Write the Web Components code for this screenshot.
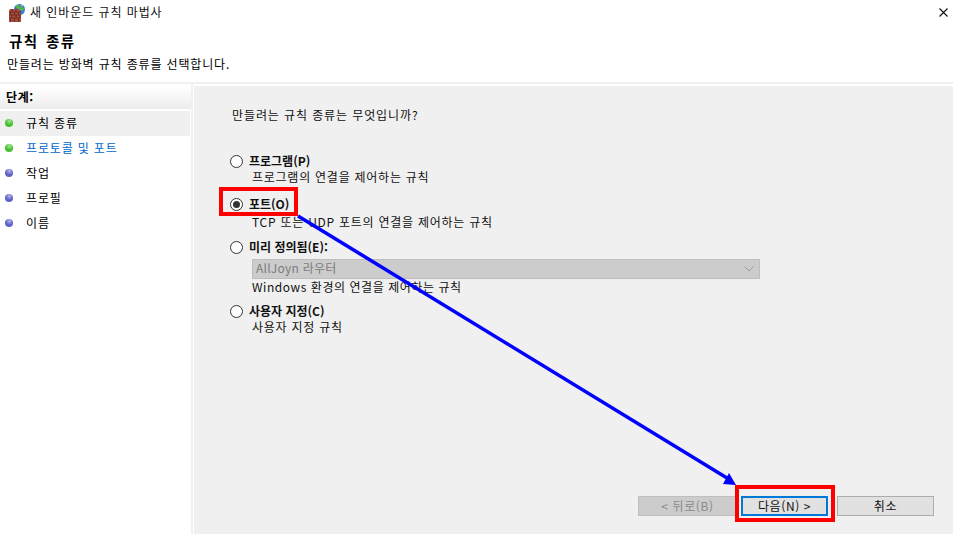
<!DOCTYPE html>
<html lang="ko">
<head>
<meta charset="utf-8">
<title>새 인바운드 규칙 마법사</title>
<style>
  html, body { margin: 0; height: 100%; background: #fff; overflow: hidden; }
  body { font: 12px "Noto Sans CJK KR", "Liberation Sans", sans-serif; color: #000; }
</style>
</head>
<body>
<rule-wizard></rule-wizard>

<script>
const KR = `"Noto Sans CJK KR", "Liberation Sans", sans-serif`;

class TitleBar extends HTMLElement {
  constructor() {
    super();
    const shadow = this.attachShadow({ mode: "open" });
    shadow.innerHTML = `
    <style>
      :host { display: flex; align-items: center; height: 26px; padding-left: 8px; box-sizing: border-box; }
      svg { display: block; flex: none; }
      span { margin-left: 5px; font-size: 12px; line-height: 16px; letter-spacing: .93px; color: #111; position: relative; top: -1px; }
      .close { margin-left: auto; margin-right: 5px; margin-bottom: 1px; }
    </style>
    <svg width="17" height="18" viewBox="0 0 17 18">
      <circle cx="11.500" cy="5.500" r="5.500" fill="#2b7fd6"/>
      <path d="M8 1.500c2-1 3.500 0 4.500 1s2.500.5 3.500 2-1.500 2-3 2-2-1.500-3.500-2S7.500 2.500 8 1.500z" fill="#58b548"/>
      <path d="M12.500.5l2.500 1.200-1 1.300z" fill="#e4d56c"/>
      <path d="M2 5h9l2 3v10H1V7z" fill="#a84a3c"/>
      <path d="M1 8h12M1 11h12M1 14h12M4 5v3M8 5v3M2.500 8v3M6.500 8v3M10.500 8v3M4 11v3M8 11v3M12 11v3M2.500 14v4M6.500 14v4M10.500 14v4" stroke="#732e24" stroke-width="1" fill="none"/>
    </svg>
    <span><slot></slot></span>
    <svg class="close" width="9" height="9" viewBox="0 0 9 9"><path d="M.5.5l8 8M8.500.5l-8 8" stroke="#111" stroke-width="1.100" fill="none"/></svg>
    `;
  }
}

class StepItem extends HTMLElement {
  constructor() {
    super();
    const shadow = this.attachShadow({ mode: "open" });
    const green = this.hasAttribute("done");
    const base = green ? "#45bf2e" : "#5e62c4";
    const light = green ? "#a9e69a" : "#b4b6ec";
    const id = "g" + Math.random().toString(36).slice(2);
    shadow.innerHTML = `
    <style>
      :host { display: flex; align-items: center; height: 25px; padding-left: 5px; box-sizing: border-box; }
      :host([current]) { background: #f0f0f0; margin-right: 1px; }
      :host([link]) { color: #0066cc; }
      svg { flex: none; display: block; position: relative; top: -1px; }
      span { margin-left: 13px; font-size: 12px; line-height: 16px; letter-spacing: .85px; position: relative; top: -1px; }
    </style>
    <svg width="8" height="8" viewBox="0 0 8 8">
      <defs><radialGradient id="${id}" cx=".55" cy=".25" r=".8"><stop offset="0" stop-color="${light}"/><stop offset=".6" stop-color="${base}"/><stop offset="1" stop-color="${base}"/></radialGradient></defs>
      <circle cx="4" cy="4" r="4" fill="url(#${id})"/>
    </svg>
    <span><slot></slot></span>
    `;
  }
}

class StepList extends HTMLElement {
  constructor() {
    super();
    const shadow = this.attachShadow({ mode: "open" });
    shadow.innerHTML = `
    <style>
      :host { display: block; width: 191px; flex: none; border-right: 2px solid #f0f0f0; box-sizing: content-box; }
      .head { height: 22px; margin-top: 3px; padding-left: 6px; font-size: 12px; font-weight: 700; line-height: 19px; letter-spacing: .6px;
              background: linear-gradient(#ffffff, #ececec); margin-bottom: 2px; }
    </style>
    <div class="head">단계:</div>
    <slot></slot>
    `;
  }
}

class RuleOption extends HTMLElement {
  constructor() {
    super();
    const shadow = this.attachShadow({ mode: "open" });
    shadow.innerHTML = `
    <style>
      :host { display: grid; grid-template-columns: 13px 1fr; column-gap: 6px; align-items: start; }
      .radio { width: 13px; height: 13px; box-sizing: border-box; border: 1px solid #333; border-radius: 50%; background: #fff;
               display: flex; align-items: center; justify-content: center; margin-top: 2px; }
      .dot { width: 7px; height: 7px; border-radius: 50%; background: #333; display: none; }
      :host([checked]) .dot { display: block; }
      .label { font-size: 12px; font-weight: 700; line-height: 16px; color: #111; }
      .body { grid-column: 2; margin-left: 3px; margin-top: var(--body-gap, 0); font-size: 12px; line-height: 16px;
              letter-spacing: var(--body-spacing, .75px); color: #111; }
    </style>
    <div class="radio"><div class="dot"></div></div>
    <div class="label"><slot name="label"></slot></div>
    <div class="body"><slot></slot></div>
    `;
  }
}

class RuleSelect extends HTMLElement {
  constructor() {
    super();
    const shadow = this.attachShadow({ mode: "open" });
    shadow.innerHTML = `
    <style>
      :host { display: flex; align-items: center; width: 508px; height: 20px; box-sizing: border-box;
              background: #cccccc; border: 1px solid #bdbdbd; padding: 0 5px 0 3px; color: #7b7b7b;
              font-size: 12px; letter-spacing: .25px; }
      span { position: relative; top: -1px; }
      svg { margin-left: auto; display: block; }
    </style>
    <span><slot></slot></span>
    <svg width="10" height="6" viewBox="0 0 10 6"><path d="M.5.5L5 4.800 9.500.5" stroke="#9a9a9a" fill="none"/></svg>
    `;
  }
}

class WizButton extends HTMLElement {
  constructor() {
    super();
    const shadow = this.attachShadow({ mode: "open" });
    shadow.innerHTML = `
    <style>
      :host { display: flex; align-items: center; justify-content: center; height: 20px; box-sizing: border-box;
              background: #e1e1e1; border: 1px solid #adadad; font-size: 12px; letter-spacing: .6px; color: #111; }
      :host([disabled]) { background: #cccccc; border-color: #bfbfbf; color: #8a8a8a; }
      :host([primary]) { border: 2px solid #0078d7; }
      span { position: relative; top: -1px; }
    </style>
    <span><slot></slot></span>
    `;
  }
}

class RuleWizard extends HTMLElement {
  constructor() {
    super();
    const shadow = this.attachShadow({ mode: "open" });
    shadow.innerHTML = `
    <style>
      :host { display: flex; flex-direction: column; position: relative; width: 953px; height: 534px; overflow: hidden;
              font-family: ${KR}; background: #fff; }
      header { height: 58px; padding: 5px 0 0 9px; box-sizing: border-box; border-bottom: 2px solid #f0f0f0; flex: none; }
      h1 { margin: 0; font-size: 14.500px; line-height: 19px; font-weight: 700; letter-spacing: 1.400px; word-spacing: 2px; }
      header p { margin: 6px 0 0 -2px; font-size: 12px; line-height: 16px; letter-spacing: .85px; }
      .main { flex: 1; display: flex; min-height: 0; }
      .pane { flex: 1; margin: 2px 0 0 1px; background: #f0f0f0; padding: 21px 20px 18px 38px; display: flex; flex-direction: column; }
      .question { font-size: 12px; line-height: 16px; letter-spacing: .9px; color: #111; }
      .options { display: flex; flex-direction: column; margin: 30px 0 0 -2px; }
      .port { margin-top: 11px; --body-gap: 2px; }
      .predefined { margin-top: 9px; --body-spacing: .55px; }
      .custom { margin-top: 8px; }
      rule-select { margin-top: 4px; }
      .buttons { margin-top: auto; display: flex; }
      .buttons > :nth-child(1) { width: 99px; margin-left: 406px; }
      .buttons > :nth-child(2) { width: 87px; margin-left: 4px; }
      .buttons > :nth-child(3) { width: 97px; margin-left: 9px; }
      .mark { position: absolute; border: 4px solid #ff0000; box-sizing: border-box; }
      .arrow { position: absolute; left: 0; top: 0; pointer-events: none; }
    </style>
    <title-bar>새 인바운드 규칙 마법사</title-bar>
    <header>
      <h1>규칙 종류</h1>
      <p>만들려는 방화벽 규칙 종류를 선택합니다.</p>
    </header>
    <div class="main">
      <step-list>
        <step-item done current>규칙 종류</step-item>
        <step-item done link>프로토콜 및 포트</step-item>
        <step-item>작업</step-item>
        <step-item>프로필</step-item>
        <step-item>이름</step-item>
      </step-list>
      <section class="pane">
        <div class="question">만들려는 규칙 종류는 무엇입니까?</div>
        <div class="options">
          <rule-option><span slot="label">프로그램(P)</span>프로그램의 연결을 제어하는 규칙</rule-option>
          <rule-option class="port" checked><span slot="label">포트(O)</span>TCP 또는 UDP 포트의 연결을 제어하는 규칙</rule-option>
          <rule-option class="predefined"><span slot="label">미리 정의됨(E):</span><rule-select>AllJoyn 라우터</rule-select>Windows 환경의 연결을 제어하는 규칙</rule-option>
          <rule-option class="custom"><span slot="label">사용자 지정(C)</span>사용자 지정 규칙</rule-option>
        </div>
        <div class="buttons">
          <wiz-button disabled>&lt; 뒤로(B)</wiz-button>
          <wiz-button primary>다음(N) &gt;</wiz-button>
          <wiz-button>취소</wiz-button>
        </div>
      </section>
    </div>
    <svg class="arrow" width="953" height="534" viewBox="0 0 953 534">
      <path d="M298 216L727 478" stroke="#0000ff" stroke-width="3.500" fill="none"/>
      <path d="M736 485L723 484 729 473z" fill="#0000ff"/>
    </svg>
    <div class="mark" style="left:219px;top:187px;width:79px;height:29px"></div>
    <div class="mark" style="left:735px;top:485px;width:100px;height:37px"></div>
    `;
  }
}

customElements.define("title-bar", TitleBar);
customElements.define("step-item", StepItem);
customElements.define("step-list", StepList);
customElements.define("rule-option", RuleOption);
customElements.define("rule-select", RuleSelect);
customElements.define("wiz-button", WizButton);
customElements.define("rule-wizard", RuleWizard);
</script>
</body>
</html>
